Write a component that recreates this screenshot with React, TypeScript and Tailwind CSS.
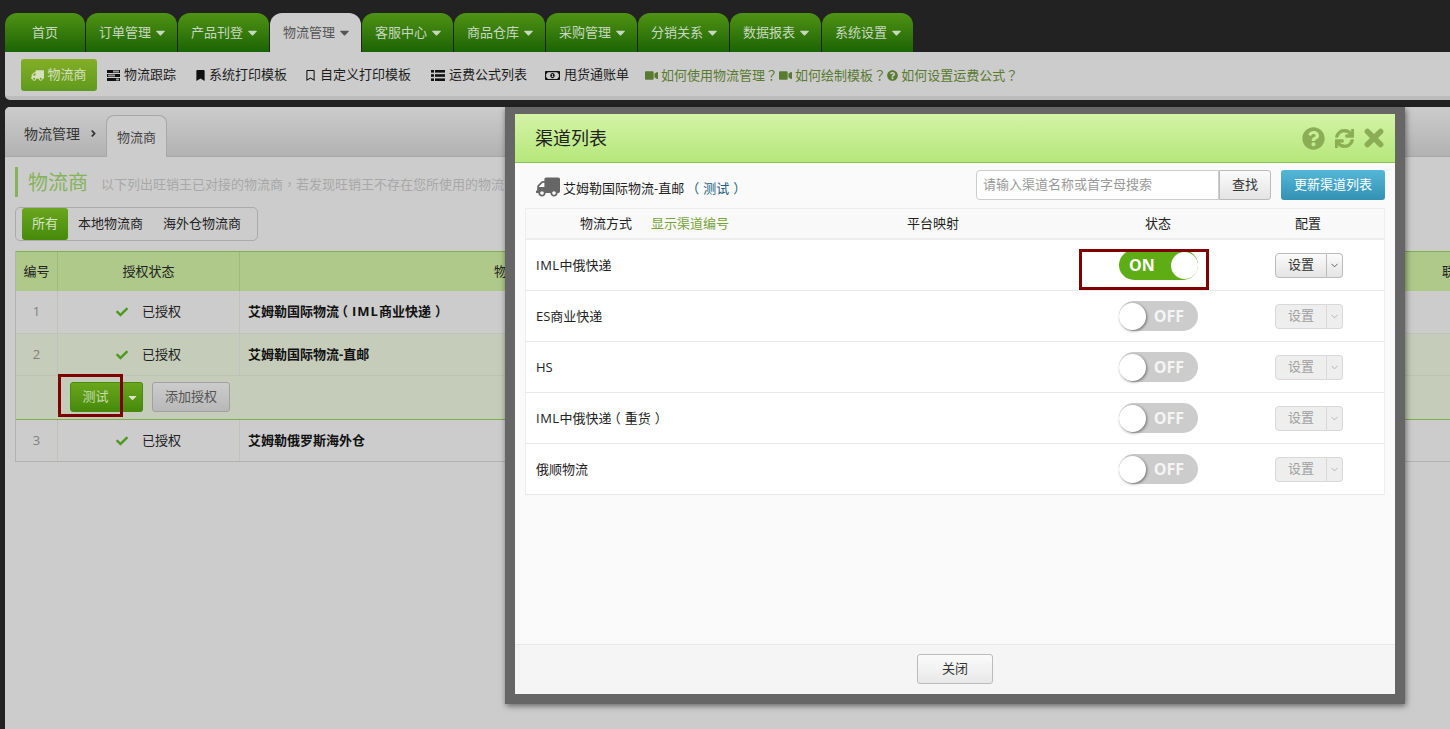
import React from "react";
import { FaTruck, FaBookmark, FaRegBookmark, FaRegMoneyBillAlt, FaVideo, FaQuestionCircle, FaSync, FaCheck, FaCaretDown, FaAngleRight } from "react-icons/fa";
import { ChevronDown } from "lucide-react";

const font = "font-['Open_Sans','Noto_Sans_CJK_SC',sans-serif] [text-spacing-trim:space-all]";
const tabs = ["首页", "订单管理", "产品刊登", "物流管理", "客服中心", "商品仓库", "采购管理", "分销关系", "数据报表", "系统设置"];

function P({ children }: { children: React.ReactNode }) {
  return <span className="font-['Noto_Sans_CJK_TC',sans-serif]">{children}</span>;
}

function OpenParen() {
  return <span className="ml-[-4px] mr-[4px]">（</span>;
}

function CloseParen() {
  return <span className="ml-[4px] mr-[-4px]">）</span>;
}

function Tab({ label, index }: { label: string; index: number }) {
  const active = label === "物流管理";
  return (
    <div
      className={
        "h-[39px] flex items-center justify-center rounded-t-[12px] text-[13px] " +
        (index === 0 ? "w-[80px] " : "w-[91px] pl-[4px] ") +
        (active ? "bg-[#cccccc] text-[#555555]" : "bg-gradient-to-b from-[#4f9314] to-[#1b6405] text-[#c8d8c0]")
      }
    >
      <span>{label}</span>
      {index > 0 && <FaCaretDown className="ml-[2px] text-[15px]" />}
    </div>
  );
}

function TasksIcon() {
  return (
    <svg width="13" height="11" viewBox="0 0 13 11">
      <rect x="0" y="0" width="13" height="3" fill="#111111" />
      <rect x="6" y="0.5" width="6" height="2" fill="#9a9a9a" />
      <rect x="0" y="4" width="13" height="3" fill="#111111" />
      <rect x="1" y="4.5" width="7" height="2" fill="#9a9a9a" />
      <rect x="0" y="8" width="13" height="3" fill="#111111" />
      <rect x="9" y="8.5" width="3" height="2" fill="#9a9a9a" />
    </svg>
  );
}

function ListIcon() {
  return (
    <svg width="14" height="11" viewBox="0 0 14 11" fill="#111111">
      <rect x="0" y="0" width="3" height="2.6" />
      <rect x="4" y="0" width="10" height="2.6" />
      <rect x="0" y="4.2" width="3" height="2.6" />
      <rect x="4" y="4.2" width="10" height="2.6" />
      <rect x="0" y="8.4" width="3" height="2.6" />
      <rect x="4" y="8.4" width="10" height="2.6" />
    </svg>
  );
}

function CloseIcon() {
  return (
    <svg width="20" height="20" viewBox="0 0 20 20" fill="none" stroke="currentColor" strokeWidth="5.6" strokeLinecap="round">
      <path d="M3.4 3.4L16.6 16.6M16.6 3.4L3.4 16.6" />
    </svg>
  );
}

function SubItem({ icon, label, className = "", gap = "gap-[3px]" }: { icon: React.ReactNode; label: string; className?: string; gap?: string }) {
  return (
    <div className={"flex items-center text-[13px] text-[#1c1c1c] " + gap + " " + className}>
      {icon}
      <span>{label}</span>
    </div>
  );
}

function HelpLink({ icon, label }: { icon: React.ReactNode; label: string }) {
  return (
    <div className="flex items-center gap-[3px] text-[13px] text-[#5a7a30]">
      {icon}
      <span>
        {label}
        <P>？</P>
      </span>
    </div>
  );
}

function Row({ n, name, tint, short }: { n: number; name: React.ReactNode; tint?: boolean; short?: boolean }) {
  return (
    <div className={"flex items-stretch " + (short ? "h-[41px] " : "h-[42px] ") + (tint ? "bg-[#c5ccb9]" : "")}>
      <div className="w-[42px] flex items-center justify-center text-[13px] text-[#808080] border-r border-[#c0c4b8]">{n}</div>
      <div className="w-[182px] flex items-center justify-center gap-[14px] text-[13px] text-[#222222] border-r border-[#c0c4b8]">
        <FaCheck className="text-[12px] text-[#4f9a1e]" />
        <span>已授权</span>
      </div>
      <div className="flex-1 flex items-center pl-[8px] whitespace-nowrap text-[13px] font-bold text-[#111111]">{name}</div>
    </div>
  );
}

function Toggle({ on }: { on?: boolean }) {
  return on ? (
    <div className="w-[79px] h-[30px] rounded-full bg-[#5fad14] flex items-center justify-between pl-[10px]">
      <span className="font-['Open_Sans',sans-serif] font-bold text-[16px] text-white">ON</span>
      <span className="w-[27px] h-[27px] rounded-full bg-white" />
    </div>
  ) : (
    <div className="w-[79px] h-[30px] rounded-full bg-[#cccccc] flex items-center justify-between pr-[14px]">
      <span className="w-[27px] h-[27px] rounded-full bg-white shadow-[1px_1px_3px_rgba(0,0,0,0.45)]" />
      <span className="font-['Open_Sans',sans-serif] font-bold text-[16px] text-[#f5f5f5]">OFF</span>
    </div>
  );
}

function SettingButton({ enabled }: { enabled?: boolean }) {
  const base = enabled
    ? "border-[#bbbbbb] bg-gradient-to-b from-[#fbfbfb] to-[#e4e4e4] text-[#333333]"
    : "border-[#d8d8d8] bg-[#eeeeee] text-[#a0a0a0]";
  return (
    <div className="flex h-[25px]">
      <div className={"w-[52px] flex items-center justify-center border rounded-l-[4px] text-[13px] " + base}>设置</div>
      <div className={"w-[16px] flex items-center justify-center border border-l-0 rounded-r-[4px] " + base}>
        <ChevronDown size={11} strokeWidth={1.6} />
      </div>
    </div>
  );
}

function ChannelRow({ name, on }: { name: React.ReactNode; on?: boolean }) {
  return (
    <div className="relative flex items-center h-[51px] border-b border-[#e8e8e8] bg-white pl-[10px] text-[13px] text-[#222222]">
      <div className="w-[583px] pt-[1px]">{name}</div>
      <Toggle on={on} />
      <div className="ml-[77px]">
        <SettingButton enabled={on} />
      </div>
      {on && <div className="absolute left-[553px] top-[9px] w-[130px] h-[41px] border-[3px] border-[#800000]" />}
    </div>
  );
}

export default function App() {
  return (
    <div className={"relative w-[1450px] h-[729px] overflow-hidden bg-[#222222] " + font}>
      {/* top navigation */}
      <div className="flex gap-px pt-[13px] pl-[5px]">
        {tabs.map((t, i) => (
          <Tab key={t} label={t} index={i} />
        ))}
      </div>

      {/* sub navigation */}
      <div className="ml-[5px] h-[48px] bg-[#cccccc] border-b-[4px] border-[#bcbcbc] rounded-bl-[5px] flex items-center pl-[16px] pt-[2px]">
        <div className="w-[76px] h-[32px] rounded-[3px] bg-gradient-to-b from-[#84ae25] to-[#5f9a1e] flex items-center justify-center gap-[3px] text-[13px] text-[#d6e0c0]">
          <FaTruck className="-scale-x-100 text-[13px]" />
          <span>物流商</span>
        </div>
        <SubItem className="ml-[10px]" gap="gap-[4px]" icon={<TasksIcon />} label="物流跟踪" />
        <SubItem className="ml-[19px]" icon={<FaBookmark className="text-[11px] text-[#111111]" />} label="系统打印模板" />
        <SubItem className="ml-[18px]" gap="gap-[4px]" icon={<FaRegBookmark className="text-[11px] text-[#111111]" />} label="自定义打印模板" />
        <SubItem className="ml-[20px]" gap="gap-[4px]" icon={<ListIcon />} label="运费公式列表" />
        <SubItem className="ml-[18px]" gap="gap-[4px]" icon={<FaRegMoneyBillAlt className="text-[15px] text-[#111111]" />} label="甩货通账单" />
        <div className="ml-[16px] flex gap-[1px]">
          <HelpLink icon={<FaVideo className="text-[13px]" />} label="如何使用物流管理" />
          <HelpLink icon={<FaVideo className="text-[13px]" />} label="如何绘制模板" />
          <HelpLink icon={<FaQuestionCircle className="text-[11px]" />} label="如何设置运费公式" />
        </div>
      </div>

      {/* main panel */}
      <div className="ml-[5px] mt-[7px] h-[622px] bg-[#cccccc] rounded-tl-[5px] overflow-hidden">
        <div className="h-[50px] bg-gradient-to-b from-[#cccccc] to-[#b2b2b2] border-b border-[#a8a8a8] flex items-end">
          <div className="w-[101px] h-full flex items-center pl-[19px] pt-[4px] gap-[8px] text-[14px] text-[#333333]">
            <span>物流管理</span>
            <FaAngleRight className="text-[11px]" />
          </div>
          <div className="w-[61px] h-[42px] -mb-px bg-[#cccccc] border border-b-0 border-[#a8a8a8] rounded-t-[8px] flex items-center justify-center pt-[3px] text-[13px] text-[#444444]">
            物流商
          </div>
        </div>

        <div className="pl-[10px] pt-[10px]">
          <div className="flex items-center h-[30px] border-l-[3px] border-[#85b35a] pl-[10px]">
            <span className="pt-px text-[20px] text-[#85b35a]">物流商</span>
            <span className="ml-[13px] pt-[5px] whitespace-nowrap text-[13px] text-[#a8a8a8]">
              以下列出旺销王已对接的物流商<P>，</P>若发现旺销王不存在您所使用的物流商
            </span>
          </div>

          <div className="mt-[10px] w-[243px] h-[34px] border border-[#aaaaaa] rounded-[5px] flex items-center pl-[6px] text-[13px] text-[#222222]">
            <div className="w-[46px] h-[32px] rounded-[3px] bg-gradient-to-b from-[#6aa61e] to-[#468a0a] text-[#d8e4c8] flex items-center justify-center">所有</div>
            <span className="ml-[10px]">本地物流商</span>
            <span className="ml-[20px]">海外仓物流商</span>
          </div>

          <div className="mt-[10px] border-x border-b border-[#b2b2b2] border-t-0 mr-[-2px]">
            <div className="flex h-[40px] bg-[#aec98a] border-t border-[#7fae4d] text-[13px] text-[#222222]">
              <div className="w-[42px] flex items-center justify-center border-r border-[#9dbb76]">编号</div>
              <div className="w-[182px] flex items-center justify-center border-r border-[#9dbb76]">授权状态</div>
              <div className="w-[547px] flex items-center justify-center">物流商</div>
              <div className="flex-1 flex items-center pl-[655px] overflow-hidden whitespace-nowrap">联</div>
            </div>
            <Row
              n={1}
              name={
                <span>
                  艾姆勒国际物流
                  <OpenParen />
                  <span className="tracking-[1px]">IML</span>商业快递
                  <CloseParen />
                </span>
              }
            />
            <div className="border-t border-[#c0c4b8]">
              <Row n={2} name="艾姆勒国际物流-直邮" tint short />
            </div>
            <div className="relative h-[45px] bg-[#c5ccb9] border-t border-[#bcc3b0] border-b border-b-[#7fae4d] flex items-center pl-[54px] pb-px">
              <div className="w-[51px] h-[30px] rounded-l-[3px] border border-[#4b8a10] bg-gradient-to-b from-[#6aa61e] to-[#468a0a] flex items-center justify-center text-[13px] text-[#c8dcb0]">测试</div>
              <div className="w-[22px] h-[30px] rounded-r-[3px] border border-l-[#7cb040] border-[#4b8a10] bg-gradient-to-b from-[#6aa61e] to-[#468a0a] flex items-center justify-center text-[#d8e4c8] text-[13px]">
                <FaCaretDown />
              </div>
              <div className="ml-[9px] w-[78px] h-[30px] rounded-[3px] border border-[#a0a0a0] bg-gradient-to-b from-[#cccccc] to-[#b8b8b8] flex items-center justify-center text-[13px] text-[#555555]">添加授权</div>
              <div className="absolute left-[42px] top-[-2px] w-[65px] h-[43px] border-[3px] border-[#800000]" />
            </div>
            <Row n={3} name="艾姆勒俄罗斯海外仓" short />
          </div>
        </div>
      </div>

      {/* modal */}
      <div className="absolute left-[505px] top-[107px] w-[900px] h-[597px] bg-[#666666] shadow-[1px_2px_6px_rgba(0,0,0,0.5)] px-[10px] pt-[7px] pb-[10px]">
        <div className="h-full bg-[#fafafa] flex flex-col">
          <div className="h-[49px] shrink-0 bg-gradient-to-b from-[#d3f3a6] to-[#b6e77a] border-b border-[#8cc152] flex items-center justify-between pl-[20px] pr-[11px]">
            <span className="text-[18px] text-[#222222]">渠道列表</span>
            <div className="flex items-center text-[#8aad55]">
              <FaQuestionCircle className="text-[23px] mr-[10px]" />
              <FaSync className="text-[19px] stroke-[20px] mr-[10px]" />
              <CloseIcon />
            </div>
          </div>

          <div className="flex items-center h-[45px] pl-[21px] pr-[10px] pb-px">
            <FaTruck className="-scale-x-100 text-[24px] text-[#666666] mt-[4px]" />
            <span className="ml-[3px] pt-[8px] text-[13px] text-[#222222]">艾姆勒国际物流-直邮</span>
            <span className="ml-[6px] pt-[8px] whitespace-nowrap text-[13px] text-[#1c5f80]">
              <OpenParen />
              测试
              <CloseParen />
            </span>
            <div className="ml-auto flex h-[30px]">
              <div className="w-[243px] border border-[#cccccc] rounded-l-[4px] bg-white flex items-center pl-[6px] text-[13px] text-[#999999]">请输入渠道名称或首字母搜索</div>
              <div className="w-[52px] border border-[#bbbbbb] rounded-r-[3px] bg-gradient-to-b from-[#fbfbfb] to-[#e4e4e4] flex items-center justify-center text-[13px] text-[#333333]">查找</div>
            </div>
            <div className="ml-[10px] w-[104px] h-[30px] rounded-[3px] bg-gradient-to-b from-[#55b7d8] to-[#3392b3] flex items-center justify-center text-[13px] text-white">更新渠道列表</div>
          </div>

          <div className="mx-[10px] border-x border-[#eeeeee]">
            <div className="relative flex items-center h-[32px] border-y border-[#eeeeee] border-b-[2px] bg-[#f9f9f9] text-[13px] text-[#222222]">
              <span className="ml-[54px]">物流方式</span>
              <span className="ml-[19px] text-[#78a23c]">显示渠道编号</span>
              <span className="ml-[178px]">平台映射</span>
              <span className="ml-[186px]">状态</span>
              <span className="ml-[124px]">配置</span>
            </div>
            <ChannelRow name={<span><span className="tracking-[0.5px]">IML</span>中俄快递</span>} on />
            <ChannelRow name="ES商业快递" />
            <ChannelRow name="HS" />
            <ChannelRow
              name={
                <span>
                  <span className="tracking-[0.5px]">IML</span>中俄快递
                  <OpenParen />
                  重货
                  <CloseParen />
                </span>
              }
            />
            <ChannelRow name="俄顺物流" />
          </div>

          <div className="mt-auto h-[50px] shrink-0 bg-[#f5f5f5] border-t border-[#e8e8e8] flex items-center justify-center pb-px">
            <div className="w-[76px] h-[30px] border border-[#bbbbbb] rounded-[3px] bg-gradient-to-b from-[#fbfbfb] to-[#e8e8e8] flex items-center justify-center text-[13px] text-[#333333]">关闭</div>
          </div>
        </div>
      </div>
    </div>
  );
}
